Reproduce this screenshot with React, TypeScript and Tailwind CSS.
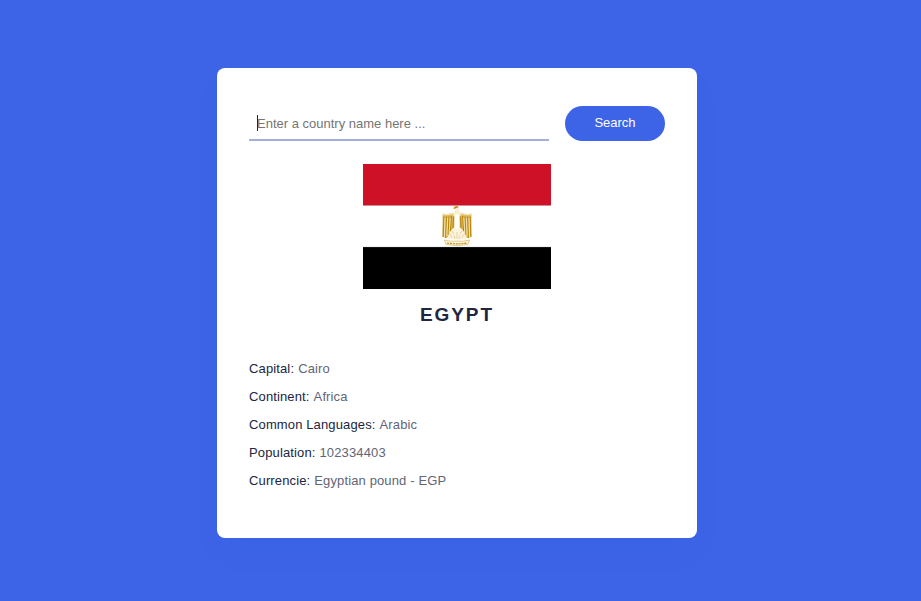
import type { FormEvent } from "react";

const details = [
  { label: "Capital", value: "Cairo" },
  { label: "Continent", value: "Africa" },
  { label: "Common Languages", value: "Arabic" },
  { label: "Population", value: "102334403" },
  { label: "Currencie", value: "Egyptian pound - EGP" },
];

function EgyptFlag() {
  return (
    <svg viewBox="0 0 188 125" className="mx-auto block w-[188px]" role="img" aria-label="Flag of Egypt">
      <rect width="188" height="125" fill="#fff" />
      <rect width="188" height="41.5" fill="#ce1126" />
      <rect y="83" width="188" height="42" fill="#000" />
      {/* Eagle of Saladin */}
      <g transform="translate(79 42)">
        <path d="M13.2 2Q15 0 16.8 2L17.3 5 19.5 7.5 18 11H12L10.5 7.5 12.7 5Z" fill="#f8efd2" />
        <path d="M11.5 2.4L12.5.4 15.5 0 16.8 1.6 14 2 12.6 3Z" fill="#c08f1e" />
        <path d="M.6 7.5Q6 9 10.5 6.8L12.6 10V21L9 25 5 32 .4 31Z" fill="#dcb95a" />
        <path d="M29.4 7.5Q24 9 19.5 6.8L17.4 10V21L21 25 25 32 29.6 31Z" fill="#dcb95a" />
        <path d="M1.8 10.5L1.2 31M4.4 10.5L3.6 32M7 10.5L6 28.5M9.4 10L8.4 25.5M11.5 10.5L11 22M28.2 10.5L28.8 31M25.6 10.5L26.4 32M23 10.5L24 28.5M20.6 10L21.6 25.5M18.5 10.5L19 22" stroke="#b9870f" strokeWidth="1.1" fill="none" />
        <path d="M3 12L2.4 31.5M5.7 12L4.8 30M8.2 12L7.2 27M27 12L27.6 31.5M24.3 12L25.2 30M21.8 12L22.8 27" stroke="#fff6d9" strokeWidth=".7" fill="none" />
        <path d="M.6 8Q6 9.5 10.5 7.3L12.5 10M29.4 8Q24 9.5 19.5 7.3L17.5 10" stroke="#f3e3b0" strokeWidth="1.3" fill="none" />
        <path d="M12.7 8.5H17.3V21L15 24 12.7 21Z" fill="#fff" />
        <path d="M12.5 21L8 26 5 33.5H25L22 26 17.5 21 15 24Z" fill="#fbf3dd" />
        <path d="M10 25L12 28M8 28L10 32M20 25L18 28M22 28L20 32M12 29L13 33M18 29L17 33M15 26V33" stroke="#dfc67e" strokeWidth=".7" fill="none" />
        <path d="M2.5 34Q9 36 15 35Q21 36 27.5 34L26 38.5Q15 40.8 4 38.5Z" fill="#fbf3da" stroke="#d9b960" strokeWidth=".7" />
        <path d="M5 37Q15 38.7 25 37" stroke="#b98918" strokeWidth="1.1" strokeDasharray="2 .9" fill="none" />
      </g>
      <path d="M0 41.5H188M0 83H188" stroke="#999" strokeWidth=".3" />
    </svg>
  );
}

export default function App() {
  const handleSubmit = (event: FormEvent) => event.preventDefault();

  return (
    <main className="flex min-h-screen items-center justify-center bg-[#3d64e6] pt-1 pr-[7px] font-['Liberation_Sans',Arial,sans-serif]">
      <section className="w-full max-w-[480px] rounded-lg bg-white px-8 pt-[38px] pb-[43px] shadow-[0_16px_32px_rgba(40,50,180,0.03)]">
        <form onSubmit={handleSubmit} className="flex gap-4">
          <div className="relative min-w-0 flex-1">
            <input
              type="text"
              aria-label="Country name"
              placeholder="Enter a country name here ..."
              className="h-[35px] w-full border-b-2 border-[#a4afdc] px-2 pt-[2px] text-[13px] text-[#20263f] outline-none placeholder:text-[#757575]"
            />
            <span aria-hidden="true" className="absolute top-[9px] left-2 h-4 w-px bg-[#20263f]" />
          </div>
          <button type="submit" className="h-[35px] w-[100px] rounded-full bg-[#3d64e6] text-[13px] text-white">
            Search
          </button>
        </form>
        <div className="mt-[23px]">
          <EgyptFlag />
          <h1 className="mt-3 text-center text-[19px] leading-7 font-bold tracking-widest text-[#20263f]">EGYPT</h1>
        </div>
        <dl className="mt-[26px] text-[13px] leading-7 tracking-[0.01em]">
          {details.map(({ label, value }) => (
            <div key={label} className="flex gap-1">
              <dt className="text-[#20263f]">{label}:</dt>
              <dd className="text-[#626576]">{value}</dd>
            </div>
          ))}
        </dl>
      </section>
    </main>
  );
}
